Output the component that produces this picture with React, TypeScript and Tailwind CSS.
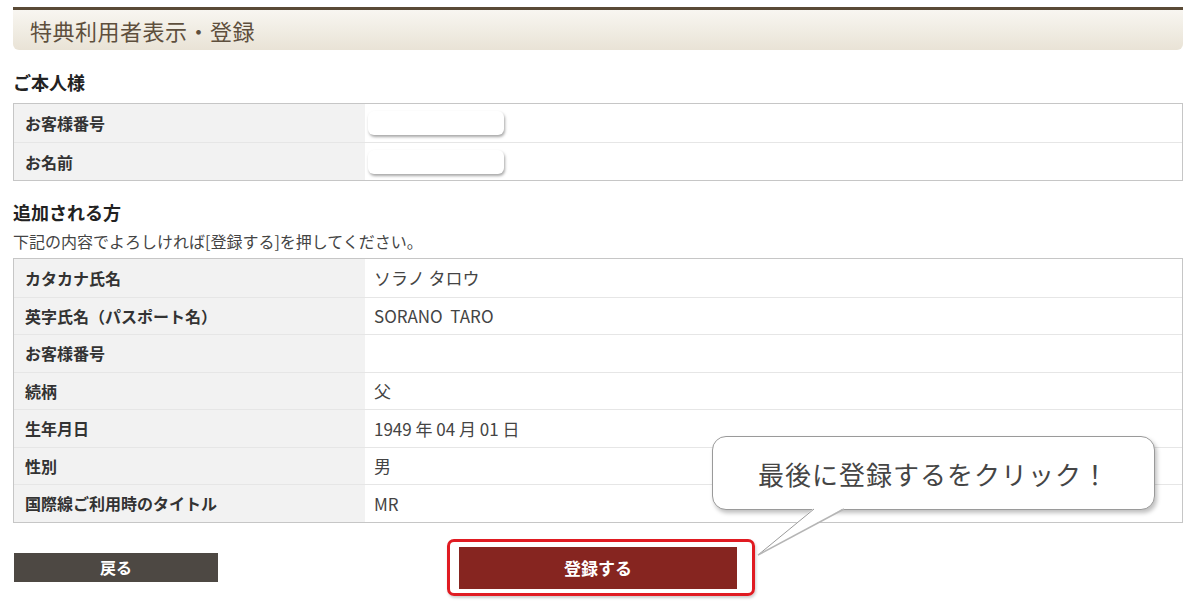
const FONT = "font-['Noto_Sans_CJK_JP','Noto_Sans',sans-serif]";

interface RowType {
  label: string;
  value?: string;
}

const addedRows: RowType[] = [
  { label: 'カタカナ氏名', value: 'ソラノ タロウ' },
  { label: '英字氏名（パスポート名）', value: 'SORANO  TARO' },
  { label: 'お客様番号', value: '' },
  { label: '続柄', value: '父' },
  { label: '生年月日', value: '1949 年 04 月 01 日' },
  { label: '性別', value: '男' },
  { label: '国際線ご利用時のタイトル', value: 'MR' },
];

const InputBox = () => (
  <div className="w-[136px] h-[24px] rounded-[6px] bg-white shadow-[1px_2px_3px_rgba(0,0,0,0.35)]" />
);

const Callout = () => (
  <div className="absolute left-[712px] top-[436px] w-[444px] h-[125px] pointer-events-none">
    <div className="w-[443px] h-[74px] rounded-[14px] bg-white border border-[#9a9a9a] shadow-[2px_3px_4px_rgba(0,0,0,0.25)] flex items-center justify-center">
      <span className="text-[26px] text-[#454545] tracking-[1px]">最後に登録するをクリック！</span>
    </div>
    <svg className="absolute left-0 top-0" width="444" height="125" viewBox="0 0 444 125">
      <polygon points="102,72 46,119 132,72" fill="#ffffff" />
      <line x1="102" y1="73" x2="46" y2="119" stroke="#9a9a9a" strokeWidth="1" />
      <line x1="132" y1="73" x2="46" y2="119" stroke="#b5b5b5" strokeWidth="1.5" />
    </svg>
  </div>
);

const App = () => {
  return (
    <div className={`relative w-[1200px] h-[601px] bg-white overflow-hidden ${FONT}`}>
      <div className="ml-[13px] w-[1170px] pt-[7px]">
        <div className="h-[43px] border-t-[3px] border-[#5a4a36] rounded-b-[6px] bg-gradient-to-b from-[#f8f6f1] to-[#e9e3d6] flex items-center pl-[17px]">
          <span className="text-[22px] text-[#5e4f3d] tracking-[0.5px]">特典利用者表示・登録</span>
        </div>

        <h2 className="mt-[20px] text-[18px] leading-[24px] font-bold text-[#222]">ご本人様</h2>
        <div className="mt-[9px] border border-[#c6c6c6]">
          {['お客様番号', 'お名前'].map((_label, i) => (
            <div
              key={_label}
              className={`flex h-[38px] ${i > 0 ? 'border-t border-[#e6e6e6]' : ''}`}
            >
              <div className="w-[351px] bg-[#f2f2f2] pl-[11px] flex items-center text-[16px] font-bold text-[#333]">
                {_label}
              </div>
              <div className="flex-1 flex items-center pl-[3px]">
                <InputBox />
              </div>
            </div>
          ))}
        </div>

        <h2 className="mt-[19px] text-[18px] leading-[24px] font-bold text-[#222]">追加される方</h2>
        <p className="mt-[7px] text-[16px] leading-[20px] text-[#444]">
          下記の内容でよろしければ[登録する]を押してください。
        </p>
        <div className="mt-[7px] border border-[#c6c6c6]">
          {addedRows.map((_row, i) => (
            <div
              key={_row.label}
              className={`flex h-[37.5px] ${i > 0 ? 'border-t border-[#e6e6e6]' : ''}`}
            >
              <div className="w-[351px] bg-[#f2f2f2] pl-[11px] flex items-center text-[16px] font-bold text-[#333]">
                {_row.label}
              </div>
              <div className="flex-1 flex items-center pl-[9px] text-[17px] text-[#444] whitespace-pre">
                {_row.value}
              </div>
            </div>
          ))}
        </div>

        <div className="mt-[16px] flex items-center">
          <button className="ml-[1px] w-[204px] h-[29px] bg-[#4d4843] text-white text-[16px] font-bold">
            戻る
          </button>
          <div className="ml-[229px] border-[3px] border-[#e01b22] rounded-[7px] pl-[9px] pr-[15px] pt-[5px] pb-[4px] shadow-[1px_2px_3px_rgba(0,0,0,0.2)]">
            <button className="w-[278px] h-[42px] bg-[#862520] text-white text-[17px] font-bold">
              登録する
            </button>
          </div>
        </div>
      </div>
      <Callout />
    </div>
  );
};

export default App;
